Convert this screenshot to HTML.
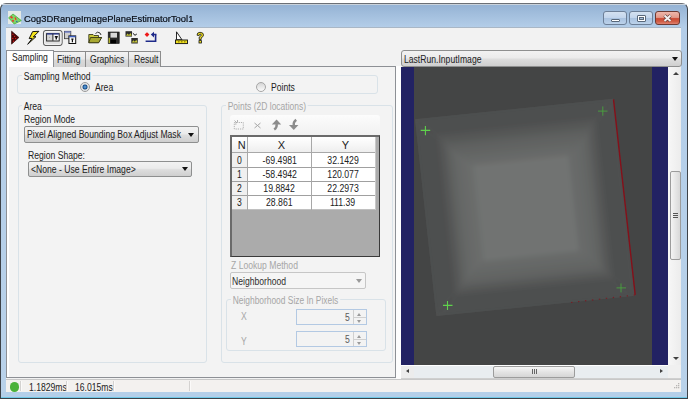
<!DOCTYPE html>
<html><head><meta charset="utf-8">
<style>
*{margin:0;padding:0;box-sizing:border-box}
html,body{width:696px;height:404px;overflow:hidden;background:#fff;font-family:"Liberation Sans",sans-serif;color:#222}
.a{position:absolute}
.t{position:absolute;white-space:nowrap;font-size:10px;line-height:10px;transform:translateY(.8px) scaleX(.86);transform-origin:0 0}
.c{position:absolute;white-space:nowrap;font-size:10px;line-height:10px;text-align:center}
.c span{display:inline-block;transform:translateY(.8px) scaleX(.87)}
.cap{position:absolute;top:11px;height:14px;border:1px solid #6d7f97;border-radius:3px;background:linear-gradient(#d4e1f0 0,#c2d5ec 50%,#a9c2e0 51%,#bcd2ea 100%)}
.tab{position:absolute;top:51px;height:16px;border:1px solid #8c8c8c;border-bottom:none;background:linear-gradient(#f3f3f3,#e8e8e8 45%,#d9d9d9 55%,#d2d2d2)}
.gb{position:absolute;border:1px solid #d9e2e8;border-radius:3px}
.gbt{position:absolute;background:#f3f3f3;padding:0 2px;white-space:nowrap;font-size:10px;line-height:10px;transform:translateY(.8px) scaleX(.86);transform-origin:0 0}
.combo{position:absolute;border:1px solid #8e8f8f;border-radius:2px;background:linear-gradient(#f2f2f2,#ebebeb 45%,#dddddd 55%,#cfcfcf)}
.arr{position:absolute;width:0;height:0;border-left:3.5px solid transparent;border-right:3.5px solid transparent;border-top:4px solid #111}
.row{position:absolute;left:232px;width:144px;height:1px;background:#a0a0a0}
</style></head><body>
<!-- window frame -->
<div class="a" style="left:0;top:3px;width:688px;height:396px;border:1px solid #3d4248;border-top-color:#6c7076;border-radius:6px 6px 0 0;background:linear-gradient(#94b2d4 0,#b3cde8 23px,#b9d2ea 100%)"></div>
<div class="a" style="left:1px;top:4px;width:686px;height:1px;background:#c9d2dc;border-radius:5px 5px 0 0"></div>
<div class="a" style="left:1px;top:392px;width:686px;height:6px;background:#b4cfe9"></div>
<div class="a" style="left:1px;top:397px;width:686px;height:1px;background:#6fc9e8"></div>
<!-- title icon -->
<div class="a" style="left:8px;top:11px;width:13px;height:13px;background:#e4e9e6"></div>
<svg class="a" style="left:8px;top:11px" width="14" height="14" viewBox="8 11 14 14"><path d="M8.6 17.8 L13 14 L21.3 20.6 L14.2 24 Z" fill="#7cd468" stroke="#49b13a" stroke-width="0.8"/><path d="M10.5 16.5 L12.5 18 M15 17.5 L16 19.8 M12 20.8 L14 21" stroke="#e8382c" stroke-width="1.6"/><circle cx="16.8" cy="21.5" r="0.7" fill="#3050c0"/><circle cx="14.5" cy="19" r="0.6" fill="#e8d030"/></svg>
<div class="t" style="left:24px;top:13.6px;font-size:9.5px;transform:scaleX(.99);color:#0a0f18;-webkit-text-stroke:0.2px #0a0f18">Cog3DRangeImagePlaneEstimatorTool1</div>
<!-- caption buttons -->
<div class="cap" style="left:603px;width:24px"></div>
<div class="a" style="left:610.5px;top:18.5px;width:9px;height:3px;background:#fff;border:1px solid #59687a;border-radius:1px"></div>
<div class="cap" style="left:629px;width:24px"></div>
<div class="a" style="left:637px;top:15px;width:9px;height:7px;border:1px solid #59687a;background:#fff;border-radius:1px"></div>
<div class="a" style="left:639px;top:17px;width:5px;height:3px;background:#a8bfd9;border:1px solid #59687a"></div>
<div class="cap" style="left:655px;width:25px;border-color:#6e3a32;background:linear-gradient(#eeb6aa 0,#e39a8a 45%,#cc4a34 55%,#d05c44 78%,#df8270 100%)"></div>
<svg class="a" style="left:662px;top:13px" width="11" height="10" viewBox="0 0 11 10"><path d="M2.5 2.5 L8.5 8 M8.5 2.5 L2.5 8" stroke="#5a3530" stroke-width="3.2" stroke-linecap="butt"/><path d="M2.5 2.5 L8.5 8 M8.5 2.5 L2.5 8" stroke="#f4f0f0" stroke-width="2"/></svg>
<!-- client -->
<div class="a" style="left:6px;top:27px;width:675px;height:365px;background:#f2f2f2;border-top:1px solid #a9b7c6"></div>

<svg class="a" style="left:10px;top:30px" width="200" height="16" viewBox="10 30 200 16">
<!-- run triangle -->
<path d="M11.6 31.2 L18.9 37.5 L11.6 44.1 Z" fill="#4a0808" stroke="#2a0303" stroke-width="0.7"/>
<g fill="#e81c1c"><circle cx="12.9" cy="34.3" r="0.65"/><circle cx="14.6" cy="36.3" r="0.65"/><circle cx="12.8" cy="38.4" r="0.65"/><circle cx="15.6" cy="38.6" r="0.65"/><circle cx="13.6" cy="41.2" r="0.65"/></g>
<!-- lightning -->
<path d="M38.9 31.3 L32.6 31.6 L29.2 38.6 L32.2 38.4 L27.7 44.3 L36 36.6 L33.3 36.9 Z" fill="#f4e41c" stroke="#111" stroke-width="1" stroke-linejoin="round"/>
<!-- pressed button -->
<rect x="43.5" y="30.5" width="18.6" height="15" rx="2.5" fill="#e1e1e1" stroke="#5e5e5e" stroke-width="1.1"/>
<rect x="44.6" y="31.6" width="16.4" height="12.8" rx="1.5" fill="none" stroke="#f6f6f6" stroke-width="0.9"/>
<rect x="46.8" y="33.8" width="6" height="7" fill="#d4d4d4"/>
<rect x="52.8" y="33.8" width="6.2" height="7" fill="#fafafa"/>
<rect x="46.6" y="33.6" width="12.6" height="7.4" fill="none" stroke="#1a1a1a" stroke-width="0.9"/>
<rect x="46.8" y="33.3" width="12.2" height="1.3" fill="#34449a"/>
<rect x="52.4" y="33.8" width="1" height="7" fill="#222"/>
<circle cx="49.5" cy="37.2" r="0.5" fill="#999"/>
<path d="M54.8 36 h3 v1.6 h-0.8 v2 h-1.4 v-2 h-0.8 Z" fill="#111"/>
<!-- two windows icon -->
<rect x="64.4" y="31.3" width="6.4" height="7.4" fill="#cfcfcf" stroke="#3a3a3a" stroke-width="0.8"/>
<rect x="64.4" y="31.3" width="6.4" height="1.4" fill="#6a7ac8"/>
<rect x="68.9" y="35.9" width="6.8" height="7.6" fill="#fafafa" stroke="#111" stroke-width="1"/>
<rect x="68.9" y="35.9" width="6.8" height="1.4" fill="#3a5ab8"/>
<path d="M71.3 38.5 h2.2 v1.3 h-0.5 v2.4 h-1.2 v-2.4 h-0.5 Z" fill="#111"/>
<!-- folder -->
<path d="M88.8 34.5 L93 34.5 L94 35.5 L98.5 35.5 L98.5 37.5 L101.5 37.5 L98.5 42.7 L88.8 42.7 Z" fill="#c9c93a" stroke="#2a2a10" stroke-width="0.8" stroke-linejoin="round"/>
<path d="M90.5 37.5 L101.6 37.5 L98.7 42.7 L88.8 42.7 Z" fill="#a8a832" stroke="#2a2a10" stroke-width="0.8"/>
<path d="M95.5 33.5 Q97.5 31 100 33 L101 35" fill="none" stroke="#222" stroke-width="0.9"/>
<!-- floppy -->
<rect x="108.2" y="32" width="11" height="11.5" fill="#2a2a2a" stroke="#111" stroke-width="0.6"/>
<rect x="110.5" y="32.8" width="6.5" height="4.8" fill="#d9d9d9"/>
<rect x="108.6" y="37.8" width="1.4" height="5.2" fill="#b0b030"/>
<rect x="110.5" y="39.8" width="5.5" height="3.5" fill="#000"/>
<!-- swap image icon -->
<rect x="125.5" y="31.2" width="6.5" height="5.4" fill="#2b2b2b"/>
<path d="M126 35.8 L127.5 33.5 L129 35 L130.5 33 L131.8 35.8 Z" fill="#c8c83a"/>
<path d="M132.8 33.2 L135 35.3 L136.8 34" fill="none" stroke="#111" stroke-width="1"/>
<rect x="131.3" y="38" width="6.5" height="5.5" fill="#2b2b2b"/>
<path d="M131.8 42.6 L133.3 40.3 L134.8 41.8 L136.3 39.8 L137.6 42.6 Z" fill="#c8c83a"/>
<!-- red dot + blue arrow -->
<path d="M147 32.2 L149.4 34.6 L147 37 L144.6 34.6 Z" fill="#ee1a1a"/>
<path d="M155.6 34.5 V41.3 H145.6" fill="none" stroke="#1e2a8a" stroke-width="1.6"/>
<path d="M150.8 34.6 L154 31.8 L154 37.4 Z" fill="#1e2a8a"/>
<path d="M153.5 34.5 H156.4" stroke="#1e2a8a" stroke-width="1.6"/>
<!-- ruler -->
<path d="M176.5 31.8 L176.5 39.8 L182 39.8 Z" fill="#fff" stroke="#111" stroke-width="0.9"/>
<rect x="175.5" y="40" width="12" height="3.6" fill="#f0e020" stroke="#111" stroke-width="0.9"/>
<path d="M178 41.8 h1.5 M181 41.8 h1.5 M184 41.8 h1.5" stroke="#5a5000" stroke-width="0.8"/>
<!-- question -->
<path d="M197 35.2 Q197 32.3 200 32.3 Q203.5 32.3 203.5 35 Q203.5 36.8 201.2 37.8 L201.2 39.5 L199.2 39.5 L199.2 37 Q201.3 36 201.3 35 Q201.3 34.2 200.2 34.2 Q199.2 34.2 199.2 35.5 Z" fill="#f0e020" stroke="#111" stroke-width="0.8" stroke-linejoin="round"/>
<rect x="199" y="40.6" width="2.4" height="2.4" fill="#f0e020" stroke="#111" stroke-width="0.8"/>
</svg>

<!-- tab page -->
<div class="a" style="left:6px;top:66px;width:390px;height:312px;border:1px solid #8d9095;background:#f3f3f3;box-shadow:inset 1px 0 0 #fff,inset 2px 0 0 #fff"></div>
<div class="tab" style="left:53px;width:33px"></div>
<div class="tab" style="left:85px;width:44px"></div>
<div class="tab" style="left:128px;width:33px"></div>
<div class="a" style="left:6px;top:50px;width:48px;height:17px;border:1px solid #8d9095;border-bottom:none;background:#fff"></div>
<div class="t" style="left:11.5px;top:52.1px">Sampling</div>
<div class="t" style="left:57px;top:54.1px">Fitting</div>
<div class="t" style="left:90px;top:54.1px">Graphics</div>
<div class="t" style="left:133.6px;top:54.1px">Result</div>
<!-- sampling method -->
<div class="gb" style="left:17px;top:75px;width:361px;height:19px"></div>
<div class="gbt" style="left:22px;top:71px">Sampling Method</div>
<div class="a" style="left:80px;top:82px;width:10px;height:10px;border-radius:50%;border:1px solid #9a9a9a;background:radial-gradient(circle at 50% 50%,#6fb0e6 0,#2a66a6 28%,#1d4d80 40%,#cfd3d6 48%,#f2f2f2 75%,#e0e0e0 100%)"></div>
<div class="t" style="left:95px;top:81.5px">Area</div>
<div class="a" style="left:256px;top:82px;width:10px;height:10px;border-radius:50%;border:1px solid #a6a6a6;background:linear-gradient(#d6d6d6,#fbfbfb)"></div>
<div class="t" style="left:270.5px;top:81.5px">Points</div>
<!-- area group -->
<div class="gb" style="left:18px;top:105px;width:189px;height:258px"></div>
<div class="gbt" style="left:22px;top:100.6px">Area</div>
<div class="t" style="left:24.2px;top:113.5px">Region Mode</div>
<div class="combo" style="left:24px;top:126px;width:175px;height:17px"></div>
<div class="t" style="left:26.8px;top:129.3px">Pixel Aligned Bounding Box Adjust Mask</div>
<div class="arr" style="left:187.5px;top:133px"></div>
<div class="t" style="left:27.5px;top:149.5px">Region Shape:</div>
<div class="combo" style="left:28px;top:161px;width:164px;height:16px"></div>
<div class="t" style="left:31px;top:164px">&lt;None - Use Entire Image&gt;</div>
<div class="arr" style="left:181.5px;top:167px"></div>
<!-- points group -->
<div class="gb" style="left:221px;top:105px;width:172px;height:258px"></div>
<div class="gbt" style="left:226px;top:100.9px;color:#a6a6a6;transform:translateY(.8px) scaleX(.85)">Points (2D locations)</div>
<div class="a" style="left:230px;top:115px;width:150px;height:20px;border-radius:3px 3px 0 0;background:linear-gradient(#fcfcfc,#f1f1f1)"></div>

<svg class="a" style="left:230px;top:115px" width="75" height="20" viewBox="230 115 75 20">
<rect x="234.3" y="122.5" width="9" height="6.5" fill="none" stroke="#a8a8a8" stroke-width="0.9" stroke-dasharray="1.2 1"/>
<path d="M234.5 120.5 L237 123 M237.5 120 L237.5 122 M235 124 L236.5 124" stroke="#a0a0a0" stroke-width="0.8"/>
<path d="M254.5 123 L260.5 128 M260.5 123 L254.5 128" stroke="#a6a6a6" stroke-width="1"/>
<path d="M276.6 119.6 L271.8 124.6 L281.2 124.6 Z" fill="#8c8c8c"/><path d="M276.6 124 Q277.2 127.5 274.2 129.6" fill="none" stroke="#8c8c8c" stroke-width="2.4"/>
<path d="M293.8 129.9 L289 124.9 L298.4 124.9 Z" fill="#8c8c8c"/><path d="M293.8 125.5 Q293.2 122 296.2 119.8" fill="none" stroke="#8c8c8c" stroke-width="2.4"/>
</svg>
<!-- grid -->
<div class="a" style="left:230px;top:135px;width:150px;height:122px;border-top:2px solid #6a6a6a;border-left:2px solid #6a6a6a;border-right:1px solid #3a3a3a;border-bottom:1px solid #3a3a3a;background:#ababab"></div>
<div class="a" style="left:232px;top:137px;width:144px;height:15px;background:linear-gradient(#ffffff,#f7f7f7 50%,#eeeeee)"></div>
<div class="row" style="top:152px;background:#a8a8a8"></div>
<div class="a" style="left:232px;top:153px;width:15px;height:57px;background:#f0f0f0"></div>
<div class="a" style="left:248px;top:153px;width:127px;height:57px;background:#fff"></div>
<div class="row" style="top:167px"></div>
<div class="row" style="top:181px"></div>
<div class="row" style="top:195px"></div>
<div class="row" style="top:209px;background:#c0c0c0"></div>
<div class="a" style="left:247px;top:137px;width:1px;height:73px;background:#a8a8a8"></div>
<div class="a" style="left:311px;top:137px;width:1px;height:73px;background:#a8a8a8"></div>
<div class="a" style="left:375px;top:137px;width:1px;height:73px;background:#c8c8c8"></div>
<div class="c" style="left:234px;top:139.5px;width:15px"><span style="transform:translateY(.8px) scaleX(1.1)">N</span></div>
<div class="c" style="left:249.5px;top:139.5px;width:63px"><span style="transform:translateY(.8px) scaleX(1.1)">X</span></div>
<div class="c" style="left:313.5px;top:139.5px;width:63px"><span style="transform:translateY(.8px) scaleX(1.1)">Y</span></div>
<div class="t" style="left:236.5px;top:154.8px">0</div>
<div class="t" style="left:236.5px;top:168.8px">1</div>
<div class="t" style="left:236.5px;top:182.8px">2</div>
<div class="t" style="left:236.5px;top:196.8px">3</div>
<div class="c" style="left:248px;top:154.8px;width:63px"><span>-69.4981</span></div>
<div class="c" style="left:248px;top:168.8px;width:63px"><span>-58.4942</span></div>
<div class="c" style="left:248px;top:182.8px;width:63px"><span>19.8842</span></div>
<div class="c" style="left:248px;top:196.8px;width:63px"><span>28.861</span></div>
<div class="c" style="left:312px;top:154.8px;width:62px"><span>32.1429</span></div>
<div class="c" style="left:312px;top:168.8px;width:62px"><span>120.077</span></div>
<div class="c" style="left:312px;top:182.8px;width:62px"><span>22.2973</span></div>
<div class="c" style="left:312px;top:196.8px;width:62px"><span>111.39</span></div>
<!-- z lookup -->
<div class="t" style="left:230.5px;top:259.8px;color:#a6a6a6">Z Lookup Method</div>
<div class="a" style="left:230px;top:272px;width:136px;height:17px;border:1px solid #c6c6c6;border-radius:2px;background:#f5f5f5"></div>
<div class="t" style="left:232px;top:275.9px;color:#2e2e2e">Neighborhood</div>
<div class="arr" style="left:355.5px;top:279px;border-top-color:#9a9a9a"></div>
<div class="gb" style="left:226px;top:299px;width:160px;height:52px"></div>
<div class="gbt" style="left:230.5px;top:294.5px;color:#a6a6a6;transform:translateY(.8px) scaleX(.84)">Neighborhood Size In Pixels</div>
<div class="t" style="left:241px;top:311.3px;color:#a6a6a6">X</div>
<div class="t" style="left:241px;top:336px;color:#a6a6a6">Y</div>
<div class="a" style="left:296px;top:309px;width:71px;height:16px;border:1px solid #b3c9e3;background:#f3f3f3"></div>
<div class="a" style="left:296px;top:331px;width:71px;height:16px;border:1px solid #b3c9e3;background:#f3f3f3"></div>
<div class="t" style="left:345px;top:312px;color:#5a5a5a">5</div>
<div class="t" style="left:345px;top:334px;color:#5a5a5a">5</div>

<div class="a" style="left:353px;top:310px;width:13px;height:14px;border-left:1px solid #d0d0d0;background:#f3f3f3"></div>
<div class="a" style="left:353px;top:316.5px;width:13px;height:1px;background:#d0d0d0"></div>
<div class="arr" style="left:357px;top:312.5px;border-top:none;border-bottom:3px solid #9a9a9a;border-left-width:2.5px;border-right-width:2.5px"></div>
<div class="arr" style="left:357px;top:319.5px;border-top:3px solid #9a9a9a;border-left-width:2.5px;border-right-width:2.5px"></div>
<div class="a" style="left:353px;top:332px;width:13px;height:14px;border-left:1px solid #d0d0d0;background:#f3f3f3"></div>
<div class="a" style="left:353px;top:338.5px;width:13px;height:1px;background:#d0d0d0"></div>
<div class="arr" style="left:357px;top:334.5px;border-top:none;border-bottom:3px solid #9a9a9a;border-left-width:2.5px;border-right-width:2.5px"></div>
<div class="arr" style="left:357px;top:341.5px;border-top:3px solid #9a9a9a;border-left-width:2.5px;border-right-width:2.5px"></div>

<!-- right pane -->
<div class="a" style="left:396px;top:66px;width:5px;height:313px;background:#fdfdfd"></div>
<div class="combo" style="left:401px;top:50px;width:281px;height:17px;border-radius:3px"></div>
<div class="t" style="left:403.5px;top:53.5px">LastRun.InputImage</div>
<div class="arr" style="left:671.5px;top:57px"></div>
<div id="img" class="a" style="left:401px;top:67px;width:267px;height:298px;background:#444545;overflow:hidden">
<svg id="plane" class="a" style="left:0;top:0" width="267" height="298"><defs><linearGradient id="gt" gradientUnits="userSpaceOnUse" x1="0" y1="0" x2="0" y2="52"><stop offset="0" stop-color="#4e4f4f"/><stop offset="0.288" stop-color="#4e4f4f"/><stop offset="0.609" stop-color="#5f6160"/><stop offset="1" stop-color="#6b6d6c"/></linearGradient><linearGradient id="gb" gradientUnits="userSpaceOnUse" x1="0" y1="196" x2="0" y2="146"><stop offset="0" stop-color="#4e4f4f"/><stop offset="0.340" stop-color="#4e4f4f"/><stop offset="0.637" stop-color="#626463"/><stop offset="1" stop-color="#6a6c6b"/></linearGradient><linearGradient id="gl" gradientUnits="userSpaceOnUse" x1="0" y1="0" x2="54" y2="0"><stop offset="0" stop-color="#4e4f4f"/><stop offset="0.352" stop-color="#4e4f4f"/><stop offset="0.644" stop-color="#646665"/><stop offset="1" stop-color="#6d6f6e"/></linearGradient><linearGradient id="gr" gradientUnits="userSpaceOnUse" x1="200" y1="0" x2="148" y2="0"><stop offset="0" stop-color="#4e4f4f"/><stop offset="0.346" stop-color="#4e4f4f"/><stop offset="0.640" stop-color="#636564"/><stop offset="1" stop-color="#6b6d6c"/></linearGradient><filter id="bl" x="-10%" y="-10%" width="120%" height="120%"><feGaussianBlur stdDeviation="2.2"/></filter><clipPath id="cp"><rect x="0" y="0" width="200" height="196"/></clipPath></defs><g transform="matrix(0.992,-0.102,0.1087,1.004,14.05,52.25)"><rect x="0" y="0" width="200" height="196" fill="#4e4f4f"/><g clip-path="url(#cp)"><g filter="url(#bl)">
<polygon points="-1.5,-1.5 201.5,-1.5 148,52 54,52" fill="url(#gt)"/>
<polygon points="-1.5,197.5 201.5,197.5 148,146 54,146" fill="url(#gb)"/>
<polygon points="-1.5,-1.5 54,52 54,146 -1.5,197.5" fill="url(#gl)"/>
<polygon points="201.5,-1.5 148,52 148,146 201.5,197.5" fill="url(#gr)"/>
<rect x="53.5" y="51.5" width="95" height="95" fill="#717372"/></g></g></g></svg>
<svg class="a" style="left:0;top:0" width="267" height="298">
<path d="M212.5 32.4 L234.2 227.9" stroke="#85101a" stroke-width="1.4"/>
<path d="M234 228 L170 235.5" stroke="#85101a" stroke-width="1.2" stroke-dasharray="1.4 5.6" opacity="0.75"/>
<g stroke="#5fd24c" stroke-width="1.1">
<path d="M19.7 63.4 h9.5 M24.4 58.9 v9.3"/>
<path d="M42 238.4 h9.5 M46.5 234 v9"/>
</g>
<g stroke="#4aa43e" stroke-width="0.9">
<path d="M197 44.1 h9.5 M201.8 39.4 v9.3"/>
<path d="M215.5 220.9 h9.5 M220 216.4 v9"/>
</g>
</svg>
</div>
<div class="a" style="left:401px;top:67px;width:13px;height:298px;background:#222263"></div>
<div class="a" style="left:652px;top:67px;width:16px;height:298px;background:#222263"></div>
<!-- scrollbars -->

<div class="a" style="left:668px;top:67px;width:13px;height:298px;background:linear-gradient(90deg,#f7f7f7,#ececec)"></div>
<div class="arr" style="left:672.5px;top:72px;border-top:none;border-bottom:3.5px solid #404040;border-left-width:3px;border-right-width:3px"></div>
<div class="arr" style="left:672.5px;top:357px;border-top:3.5px solid #404040;border-left-width:3px;border-right-width:3px"></div>
<div class="a" style="left:669.5px;top:171px;width:11px;height:89px;border:1px solid #9c9c9c;border-radius:2px;background:linear-gradient(90deg,#f4f4f4,#e6e6e6 50%,#d8d8d8)"></div>
<div class="a" style="left:672.5px;top:212.5px;width:5px;height:1px;background:#555;box-shadow:0 2px 0 #555,0 4px 0 #555"></div>
<div class="a" style="left:401px;top:365px;width:267px;height:1px;background:#fff"></div>
<div class="a" style="left:401px;top:366px;width:267px;height:12px;background:#e9edf0"></div>
<div class="a" style="left:401px;top:366px;width:13px;height:12px;background:#ececec"></div>
<div class="arr" style="left:405.5px;top:369px;border-left:none;border-right:3px solid #404040;border-top:2.8px solid transparent;border-bottom:2.8px solid transparent"></div>
<div class="arr" style="left:659.5px;top:369px;border-right:none;border-left:3px solid #404040;border-top:2.8px solid transparent;border-bottom:2.8px solid transparent"></div>
<div class="a" style="left:493px;top:366px;width:82px;height:11.5px;border:1px solid #9c9c9c;border-radius:2px;background:linear-gradient(#f6f6f6,#e4e4e4 50%,#d6d6d6)"></div>
<div class="a" style="left:531.5px;top:369px;width:1px;height:5px;background:#666;box-shadow:2px 0 0 #666,4px 0 0 #666"></div>
<div class="a" style="left:668px;top:365px;width:13px;height:14px;background:#f0f0f0"></div>
<div class="a" style="left:401px;top:378px;width:280px;height:1px;background:#cfcfcf"></div>

<!-- status -->
<div class="a" style="left:6px;top:379px;width:675px;height:1px;background:#c8c8c8"></div>
<div class="a" style="left:6px;top:380px;width:675px;height:12px;background:#f3f1ef"></div>
<div class="a" style="left:9.5px;top:382px;width:9.5px;height:9.5px;border-radius:50%;background:#4bb23a"></div>
<div class="t" style="left:28.7px;top:381.5px">1.1829ms</div>
<div class="t" style="left:74.9px;top:381.5px">16.015ms</div>
<div class="a" style="left:20px;top:381px;width:1px;height:10px;background:#d4d2d0;box-shadow:1px 0 0 #fbfaf9"></div>
<div class="a" style="left:66px;top:381px;width:1px;height:10px;background:#d4d2d0;box-shadow:1px 0 0 #fbfaf9"></div>
<div class="a" style="left:113px;top:381px;width:1px;height:10px;background:#d4d2d0;box-shadow:1px 0 0 #fbfaf9"></div>
<div class="a" style="left:189px;top:381px;width:1px;height:10px;background:#d4d2d0;box-shadow:1px 0 0 #fbfaf9"></div>
<svg class="a" style="left:672px;top:382px" width="9" height="9"><g fill="#b8b6b4"><rect x="6" y="1" width="1.3" height="1.3"/><rect x="4" y="3" width="1.3" height="1.3"/><rect x="6" y="3" width="1.3" height="1.3"/><rect x="2" y="5" width="1.3" height="1.3"/><rect x="4" y="5" width="1.3" height="1.3"/><rect x="6" y="5" width="1.3" height="1.3"/></g></svg>
</body></html>
